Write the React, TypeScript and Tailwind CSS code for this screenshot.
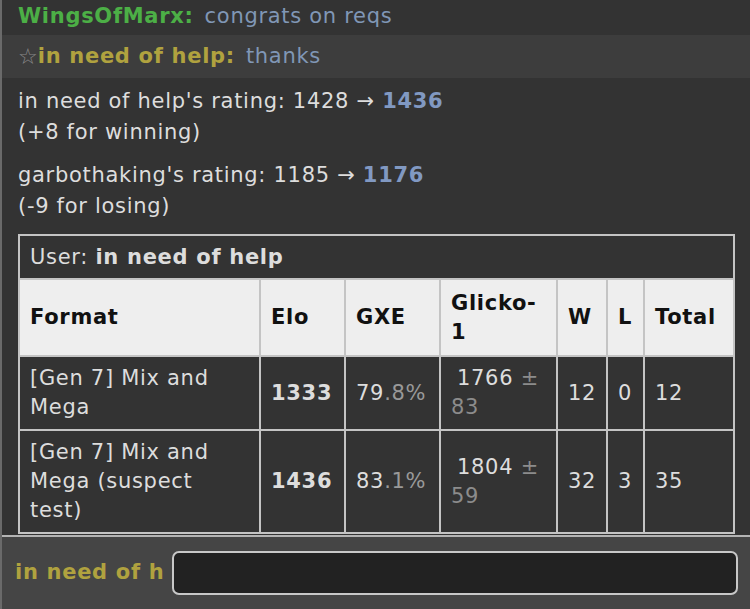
import React from 'react';

type Row = {
    format: string;
    elo: string;
    gxeInt: string;
    gxeDec: string;
    glicko: string;
    dev: string;
    w: string;
    l: string;
    total: string;
};

const rows: Row[] = [
    { format: '[Gen 7] Mix and Mega', elo: '1333', gxeInt: '79', gxeDec: '.8%', glicko: '1766', dev: '83', w: '12', l: '0', total: '12' },
    { format: '[Gen 7] Mix and Mega (suspect test)', elo: '1436', gxeInt: '83', gxeDec: '.1%', glicko: '1804', dev: '59', w: '32', l: '3', total: '35' },
];

const cell = 'border-2 border-[#c4c4c4] px-[10px] align-middle';

const RatingLine = ({ name, from, to, note }: { name: string; from: string; to: string; note: string }) => (
    <p className="leading-[31px]">
        {name}'s rating: {from} → <strong className="text-[#8199c2]">{to}</strong>
        <br />
        {note}
    </p>
);

const App = () => {
    return (
        <div
            className="w-[750px] h-[609px] overflow-hidden bg-[#333333] text-[21px] tracking-[0.7px] text-[#dddddd] border-l-2 border-[#6a6a6a] flex flex-col"
            style={{ fontFamily: '"DejaVu Sans", Verdana, sans-serif' }}
        >
            <div className="flex-1 overflow-hidden">
                {/* chat lines */}
                <div className="h-[35px] flex items-center pl-4 pb-[2px]">
                    <strong className="text-[#4caf46]">WingsOfMarx:</strong>
                    <span className="ml-[11px] text-[#8097b6]">congrats on reqs</span>
                </div>
                <div className="h-[43px] flex items-center pl-4 bg-[#3d3d3d]">
                    <span className="text-[#8a8a8a] text-[22px] leading-none tracking-normal">☆</span>
                    <strong className="text-[#b0a23f]">in need of help:</strong>
                    <span className="ml-[11px] text-[#8097b6]">thanks</span>
                </div>

                {/* rating changes */}
                <div className="pl-4 pr-4 pt-[8px] space-y-[12px]">
                    <RatingLine name="in need of help" from="1428" to="1436" note="(+8 for winning)" />
                    <RatingLine name="garbothaking" from="1185" to="1176" note="(-9 for losing)" />
                </div>

                {/* ladder table */}
                <table className="ml-4 mt-[12px] w-[717px] table-fixed border-collapse border-2 border-[#c4c4c4] leading-[29px]">
                    <colgroup>
                        <col className="w-[241px]" />
                        <col className="w-[85px]" />
                        <col className="w-[95px]" />
                        <col className="w-[117px]" />
                        <col className="w-[50px]" />
                        <col className="w-[37px]" />
                        <col />
                    </colgroup>
                    <tbody>
                        <tr>
                            <td colSpan={7} className={`${cell} h-[44px] pt-px`}>
                                User: <strong>in need of help</strong>
                            </td>
                        </tr>
                        <tr className="bg-[#eeeeee] text-[#111111] font-bold text-left">
                            <th className={`${cell} h-[77px]`}>Format</th>
                            <th className={cell}>Elo</th>
                            <th className={cell}>GXE</th>
                            <th className={cell}>Glicko-<br />1</th>
                            <th className={cell}>W</th>
                            <th className={cell}>L</th>
                            <th className={cell}>Total</th>
                        </tr>
                        {rows.map((r) => (
                            <tr key={r.format}>
                                <td className={`${cell} py-[7px]`}>{r.format}</td>
                                <td className={cell}><strong>{r.elo}</strong></td>
                                <td className={cell}>
                                    {r.gxeInt}<span className="text-[#999999]">{r.gxeDec}</span>
                                </td>
                                <td className={cell}>
                                    <span className="ml-[6px]">{r.glicko}</span>{' '}
                                    <span className="text-[#8c8c8c]">± {r.dev}</span>
                                </td>
                                <td className={cell}>{r.w}</td>
                                <td className={cell}>{r.l}</td>
                                <td className={cell}>{r.total}</td>
                            </tr>
                        ))}
                    </tbody>
                </table>
            </div>

            {/* message box */}
            <div className="h-[74px] shrink-0 bg-[#454545] border-t-2 border-[#b4b4b4] flex items-center pl-[13px] pr-[12px] gap-[8px]">
                <strong className="text-[#b0a23f] whitespace-nowrap">in need of h</strong>
                <div className="flex-1 h-[44px] bg-[#222222] border-2 border-[#c8c8c8] rounded-[7px]" />
            </div>
        </div>
    );
};

export default App;
